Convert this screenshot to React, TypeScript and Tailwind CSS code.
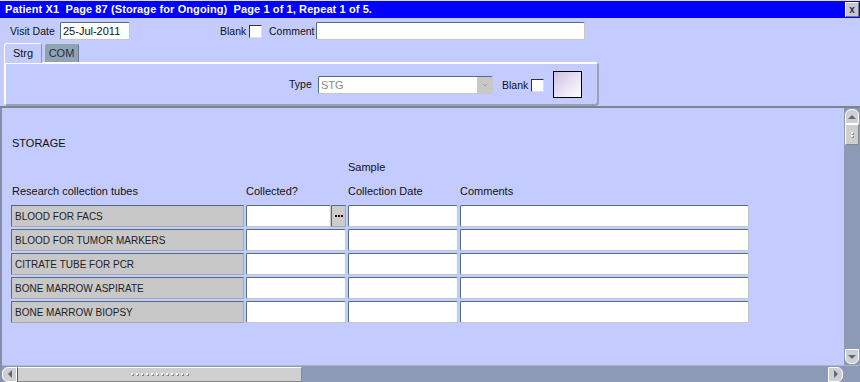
import { ChevronDown } from "lucide-react";

const font = { fontFamily: '"Liberation Sans", Arial, sans-serif' };

const inputCls =
  "bg-white border border-t-[#4f6f80] border-l-[#4f6f80] border-b-[#c6c6c6] border-r-[#c6c6c6] rounded-[2px]";

const tubes = [
  "BLOOD FOR FACS",
  "BLOOD FOR TUMOR MARKERS",
  "CITRATE TUBE FOR PCR",
  "BONE MARROW ASPIRATE",
  "BONE MARROW BIOPSY",
];

function Check() {
  return <div className="w-[13px] h-[13px] bg-white border border-t-[#333] border-l-[#333] border-b-[#ddd] border-r-[#ddd]" />;
}

function Grip({ vertical }: { vertical?: boolean }) {
  return (
    <div className={vertical ? "flex flex-col gap-[1px]" : "flex gap-[3px]"}>
      {Array.from({ length: vertical ? 2 : 12 }).map((_, i) => (
        <div key={i} className="w-[2px] h-[2px] bg-white shadow-[1px_1px_0_#7a8a9a]" />
      ))}
    </div>
  );
}

export default function App() {
  return (
    <div className="w-[860px] h-[382px] bg-[#c4ccff] text-[11px] leading-[13px] text-[#111] flex flex-col overflow-hidden" style={font}>
      {/* title bar */}
      <div className="h-[18px] border-t border-[#dde] bg-[#0000ff] flex items-center justify-between pl-[5px] pr-[1px]">
        <span className="text-white font-bold text-[11px] tracking-[0.1px] whitespace-pre leading-none">
          Patient X1  Page 87 (Storage for Ongoing)  Page 1 of 1, Repeat 1 of 5.
        </span>
        <div className="w-[14px] h-[15px] bg-[#c8c8c8] border border-t-white border-l-white border-b-[#777] border-r-[#777] flex items-center justify-center text-[10px] font-bold text-[#1a2a80] leading-none">
          x
        </div>
      </div>

      {/* visit row */}
      <div className="flex items-center h-[18px] mt-[4px] pl-[10px] text-[10.5px]">
        <span className="w-[50px]">Visit Date</span>
        <div className={`${inputCls} w-[70px] h-[18px] flex items-center px-[2px] text-[11px]`}>25-Jul-2011</div>
        <span className="ml-[90px] w-[29px]">Blank</span>
        <Check />
        <span className="ml-[7px] w-[47px]">Comment</span>
        <div className={`${inputCls} w-[269px] h-[18px]`} />
      </div>

      {/* tabs */}
      <div className="flex items-end h-[20px] pl-[4px] mt-[2px]">
        <div className="w-[38px] h-[20px] bg-[#c4ccff] border border-b-0 border-t-white border-l-white border-r-[#8a96b0] rounded-t-[3px] flex items-center justify-center relative top-[1px]">
          Strg
        </div>
        <div className="ml-[2px] w-[35px] h-[19px] bg-[#8ea4b4] border border-b-0 border-t-[#c8d0e0] border-l-[#c8d0e0] border-r-[#6a7a8a] rounded-t-[3px] flex items-center justify-center text-[#2a2a40]">
          COM
        </div>
      </div>

      {/* panel */}
      <div className="ml-[4px] w-[595px] h-[44px] border-2 border-t-white border-l-white border-b-[#9aa0b0] border-r-[#9aa0b0] rounded-b-[4px] rounded-tr-[4px] flex items-center pl-[283px] text-[10.5px]">
        <span className="w-[29px]">Type</span>
        <div className={`${inputCls} w-[175px] h-[18px] flex items-center justify-between pl-[2px] text-[#8a8a8a] text-[11px] mt-[2px]`}>
          STG
          <div className="w-[15px] h-[16px] bg-[#c8c8c8] flex items-center justify-center">
            <ChevronDown size={8} color="#999" strokeWidth={2.5} />
          </div>
        </div>
        <span className="ml-[9px] w-[29px] mt-[3px]">Blank</span>
        <div className="mt-[3px]"><Check /></div>
        <div className="ml-[9px] w-[29px] h-[27px] border border-black bg-gradient-to-br from-[#cdbfe6] via-[#e8e0f4] to-white" />
      </div>

      {/* separator */}
      <div className="h-[2px] bg-[#7a8696]" />

      {/* main area */}
      <div className="flex-1 flex flex-col border-l-2 border-[#8390a6]">
        <div className="flex-1 flex">
          <div className="flex-1 pl-[10px]">
            <div className="mt-[29px]">STORAGE</div>
            <div className="mt-[11px] pl-[336px]">Sample</div>
            <div className="mt-[11px] flex">
              <span className="w-[234px]">Research collection tubes</span>
              <span className="w-[102px]">Collected?</span>
              <span className="w-[112px]">Collection Date</span>
              <span>Comments</span>
            </div>
            <div className="mt-[7px] flex flex-col gap-[2px] -ml-[1px]">
              {tubes.map((t, i) => (
                <div key={t} className="flex gap-[2px] h-[22px]">
                  <div className="w-[233px] bg-[#c8c8c8] border border-t-[#4f6f80] border-l-[#4f6f80] border-b-[#aaa] border-r-[#aaa] flex items-center pl-[3px] text-[#222] text-[10px]">
                    {t}
                  </div>
                  {i === 0 ? (
                    <div className="w-[100px] flex">
                      <div className={`${inputCls} flex-1`} />
                      <div className="w-[15px] bg-[#cccccc] border border-t-[#4f6f80] border-l-[#4f6f80] border-b-[#aaa] border-r-[#aaa] flex items-center justify-center gap-[1px]">
                        <div className="w-[2px] h-[2px] bg-[#300]" />
                        <div className="w-[2px] h-[2px] bg-[#300]" />
                        <div className="w-[2px] h-[2px] bg-[#300]" />
                      </div>
                    </div>
                  ) : (
                    <div className={`${inputCls} w-[100px]`} />
                  )}
                  <div className={`${inputCls} w-[110px]`} />
                  <div className={`${inputCls} w-[289px]`} />
                </div>
              ))}
            </div>
          </div>

          {/* vertical scrollbar */}
          <div className="w-[16px] bg-[#8c9ab6] flex flex-col items-center pt-[1px] pb-[1px]">
            <div className="w-[14px] h-[15px] bg-[#cfcfcf] rounded-t-[6px] border border-white flex items-center justify-center">
              <div className="w-0 h-0 border-l-[4px] border-r-[4px] border-b-[4px] border-l-transparent border-r-transparent border-b-[#5a6a80]" />
            </div>
            <div className="w-[14px] h-[21px] bg-[#cfcfcf] border border-t-white border-l-white border-b-[#888] border-r-[#888] flex items-center justify-center">
              <Grip vertical />
            </div>
            <div className="flex-1" />
            <div className="w-[14px] h-[15px] bg-[#cfcfcf] rounded-b-[6px] border border-white flex items-center justify-center">
              <div className="w-0 h-0 border-l-[4px] border-r-[4px] border-t-[4px] border-l-transparent border-r-transparent border-t-[#5a6a80]" />
            </div>
          </div>
        </div>

        {/* horizontal scrollbar */}
        <div className="h-[17px] bg-[#8c9ab6] flex items-center border-t border-[#aab4cc]">
          <div className="w-[15px] h-[15px] bg-[#cfcfcf] rounded-l-[6px] border border-white flex items-center justify-center">
            <div className="w-0 h-0 border-t-[4px] border-b-[4px] border-r-[4px] border-t-transparent border-b-transparent border-r-[#5a6a80]" />
          </div>
          <div className="w-[285px] h-[15px] bg-[#cfcfcf] border border-t-white border-l-[#555] border-b-[#888] border-r-[#888] flex items-center justify-center">
            <Grip />
          </div>
          <div className="flex-1" />
          <div className="w-[15px] h-[15px] bg-[#cfcfcf] rounded-r-[6px] border border-white flex items-center justify-center mr-[17px]">
            <div className="w-0 h-0 border-t-[4px] border-b-[4px] border-l-[4px] border-t-transparent border-b-transparent border-l-[#5a6a80]" />
          </div>
        </div>
      </div>
    </div>
  );
}
